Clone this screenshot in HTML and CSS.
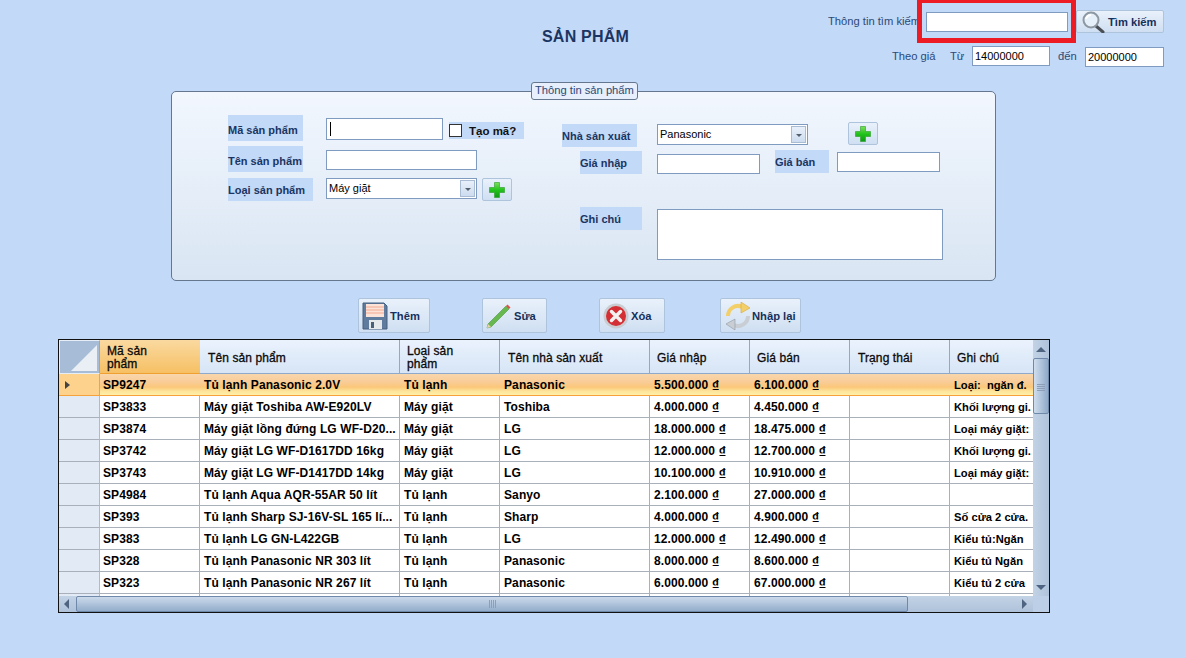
FILE: index.html
```html
<!DOCTYPE html>
<html lang="vi">
<head>
  <meta charset="UTF-8" />
  <title>Sản phẩm</title>
  <link rel="stylesheet" href="styles.css">
</head>
<body>
  <svg class="defs" width="0" height="0">
    <defs>
      <linearGradient id="plusFill" x1="0" y1="0" x2="0" y2="1">
        <stop offset="0" stop-color="#7be05a"/>
        <stop offset="0.5" stop-color="#22c21c"/>
        <stop offset="1" stop-color="#0b9a12"/>
      </linearGradient>
      <symbol id="plus" viewBox="0 0 16 16">
        <path d="M5.500 0.500h5v5h5v5h-5v5h-5v-5h-5v-5h5z" fill="url(#plusFill)" stroke="#2e9a2a" stroke-width="0.6"/>
      </symbol>
    </defs>
  </svg>

  <header class="top">
    <h1 class="title">SẢN PHẨM</h1>
    <div class="search">
      <div class="search-row">
        <span class="search-label">Thông tin tìm kiếm</span>
        <input class="field search-input" type="text" />
        <button class="btn search-btn">
          <svg width="26" height="22" viewBox="0 0 26 22">
            <path d="M15 15l7 6" stroke="#4a4f55" stroke-width="3" stroke-linecap="round"/>
            <circle cx="10" cy="9" r="7.500" fill="#e6f0fa" stroke="#8d98a3" stroke-width="2"/>
            <path d="M5 8a5.500 5.500 0 0 1 5-4" fill="none" stroke="#fff" stroke-width="2"/>
          </svg>
          Tìm kiếm
        </button>
      </div>
      <div class="price-row">
        <span class="price-label">Theo giá</span>
        <span class="from">Từ</span>
        <input class="field price-from" type="text" value="14000000" />
        <span class="to">đến</span>
        <input class="field price-to" type="text" value="20000000" />
      </div>
    </div>
  </header>

  <section class="panel">
    <span class="legend">Thông tin sản phẩm</span>
    <div class="col-left">
      <div class="row row-code">
        <label class="tag tag-75">Mã sản phẩm</label>
        <div class="field code-input"><i class="caret"></i></div>
        <div class="tag check-wrap"><i class="check"></i><b>Tạo mã?</b></div>
      </div>
      <div class="row row-name">
        <label class="tag tag-75">Tên sản phẩm</label>
        <input class="field name-input" type="text" />
      </div>
      <div class="row row-type">
        <label class="tag tag-85">Loại sản phẩm</label>
        <div class="field combo">Máy giặt<i class="combo-arrow"></i></div>
        <button class="btn plus-btn"><svg width="16" height="16"><use href="#plus"/></svg></button>
      </div>
    </div>
    <div class="col-right">
      <div class="row row-maker">
        <label class="tag tag-75">Nhà sản xuất</label>
        <div class="field combo">Panasonic<i class="combo-arrow"></i></div>
        <button class="btn plus-btn"><svg width="16" height="16"><use href="#plus"/></svg></button>
      </div>
      <div class="row row-price">
        <label class="tag tag-62">Giá nhập</label>
        <input class="field buy-input" type="text" />
        <label class="tag tag-54">Giá bán</label>
        <input class="field sell-input" type="text" />
      </div>
      <div class="row row-note">
        <label class="tag tag-62">Ghi chú</label>
        <textarea class="field note-input"></textarea>
      </div>
    </div>
  </section>

  <div class="actions">
    <button class="btn act act-add">
      <svg width="26" height="28" viewBox="0 0 26 28">
        <path d="M1 1h21l3 3v23H1z" fill="#5f7b9d" stroke="#46607f"/>
        <rect x="4" y="2" width="18" height="13" fill="#fbe3d9"/>
        <path d="M4 5h18M4 8h18M4 11h18" stroke="#f3a98f"/>
        <rect x="7" y="18" width="13" height="9" fill="#e6e9ec"/>
        <rect x="9" y="20" width="3" height="6" fill="#4a5f78"/>
      </svg>
      Thêm
    </button>
    <button class="btn act act-edit">
      <svg width="26" height="28" viewBox="0 0 26 28">
        <path d="M1 26l1-4L20 4l3 3L5 25z" fill="#67b84f" stroke="#3f8a35" stroke-width="0.5"/>
        <path d="M20 4l1.500-1.500 3 3L23 7z" fill="#d9534f"/>
        <path d="M1 26l1-4 3 3z" fill="#e9d3a8"/>
      </svg>
      Sửa
    </button>
    <button class="btn act act-del">
      <svg width="26" height="26" viewBox="0 0 26 26">
        <circle cx="13" cy="13" r="12.500" fill="#c9ccd0"/>
        <circle cx="13" cy="13" r="10" fill="#d32f34"/>
        <path d="M8.500 8.500l9 9M17.500 8.500l-9 9" stroke="#f4f1f1" stroke-width="3.500" stroke-linecap="round"/>
      </svg>
      Xóa
    </button>
    <button class="btn act act-reset">
      <svg width="28" height="28" viewBox="0 0 28 28">
        <path d="M4 14A10 10 0 0 1 18 4.800" fill="none" stroke="#f3cf6a" stroke-width="4"/>
        <path d="M17 0l9 6-9 5z" fill="#f3cf6a" stroke="#d9a93a" stroke-width="0.6"/>
        <path d="M24 14A10 10 0 0 1 10 23.200" fill="none" stroke="#c9ced4" stroke-width="4"/>
        <path d="M11 28l-9-6 9-5z" fill="#c9ced4" stroke="#8f98a3" stroke-width="0.6"/>
      </svg>
      Nhập lại
    </button>
  </div>

  <div class="grid">
    <div class="grid-view">
      <table>
        <colgroup>
          <col class="c-head"><col class="c-100"><col class="c-200"><col class="c-100"><col class="c-150"><col class="c-100"><col class="c-100"><col class="c-100"><col class="c-83">
        </colgroup>
        <thead>
          <tr>
            <th class="corner"><i></i></th>
            <th class="sel two-line">Mã sản<br>phẩm</th>
            <th>Tên sản phẩm</th>
            <th class="two-line">Loại sản<br>phẩm</th>
            <th>Tên nhà sản xuất</th>
            <th class="price">Giá nhập</th>
            <th class="price">Giá bán</th>
            <th>Trạng thái</th>
            <th class="last">Ghi chú</th>
          </tr>
        </thead>
        <tbody>
          <tr class="current"><td class="rh"><i class="pointer"></i></td><td>SP9247</td><td>Tủ lạnh Panasonic 2.0V</td><td>Tủ lạnh</td><td>Panasonic</td><td>5.500.000 <span class="vnd">₫</span></td><td>6.100.000 <span class="vnd">₫</span></td><td></td><td>Loại:  ngăn đ.</td></tr>
          <tr><td class="rh"></td><td>SP3833</td><td>Máy giặt Toshiba AW-E920LV</td><td>Máy giặt</td><td>Toshiba</td><td>4.000.000 <span class="vnd">₫</span></td><td>4.450.000 <span class="vnd">₫</span></td><td></td><td>Khối lượng gi.</td></tr>
          <tr><td class="rh"></td><td>SP3874</td><td>Máy giặt lồng đứng LG WF-D20...</td><td>Máy giặt</td><td>LG</td><td>18.000.000 <span class="vnd">₫</span></td><td>18.475.000 <span class="vnd">₫</span></td><td></td><td>Loại máy giặt:</td></tr>
          <tr><td class="rh"></td><td>SP3742</td><td>Máy giặt LG WF-D1617DD 16kg</td><td>Máy giặt</td><td>LG</td><td>12.000.000 <span class="vnd">₫</span></td><td>12.700.000 <span class="vnd">₫</span></td><td></td><td>Khối lượng gi.</td></tr>
          <tr><td class="rh"></td><td>SP3743</td><td>Máy giặt LG WF-D1417DD 14kg</td><td>Máy giặt</td><td>LG</td><td>10.100.000 <span class="vnd">₫</span></td><td>10.910.000 <span class="vnd">₫</span></td><td></td><td>Loại máy giặt:</td></tr>
          <tr><td class="rh"></td><td>SP4984</td><td>Tủ lạnh Aqua AQR-55AR 50 lít</td><td>Tủ lạnh</td><td>Sanyo</td><td>2.100.000 <span class="vnd">₫</span></td><td>27.000.000 <span class="vnd">₫</span></td><td></td><td></td></tr>
          <tr><td class="rh"></td><td>SP393</td><td>Tủ lạnh Sharp SJ-16V-SL 165 lí...</td><td>Tủ lạnh</td><td>Sharp</td><td>4.000.000 <span class="vnd">₫</span></td><td>4.900.000 <span class="vnd">₫</span></td><td></td><td>Số cửa 2 cửa.</td></tr>
          <tr><td class="rh"></td><td>SP383</td><td>Tủ lạnh LG GN-L422GB</td><td>Tủ lạnh</td><td>LG</td><td>12.000.000 <span class="vnd">₫</span></td><td>12.490.000 <span class="vnd">₫</span></td><td></td><td>Kiểu tủ:Ngăn</td></tr>
          <tr><td class="rh"></td><td>SP328</td><td>Tủ lạnh Panasonic NR 303 lít</td><td>Tủ lạnh</td><td>Panasonic</td><td>8.000.000 <span class="vnd">₫</span></td><td>8.600.000 <span class="vnd">₫</span></td><td></td><td>Kiểu tủ Ngăn</td></tr>
          <tr><td class="rh"></td><td>SP323</td><td>Tủ lạnh Panasonic NR 267 lít</td><td>Tủ lạnh</td><td>Panasonic</td><td>6.000.000 <span class="vnd">₫</span></td><td>67.000.000 <span class="vnd">₫</span></td><td></td><td>Kiểu tủ 2 cửa</td></tr>
          <tr><td class="rh"></td><td></td><td></td><td></td><td></td><td></td><td></td><td></td><td></td></tr>
        </tbody>
      </table>
    </div>
    <div class="vscroll">
      <i class="arrow-up"></i>
      <div class="vthumb"><i class="grip-h"></i></div>
      <i class="arrow-down"></i>
    </div>
    <div class="hscroll">
      <i class="arrow-left"></i>
      <div class="hthumb"><i class="grip-v"></i></div>
      <i class="arrow-right"></i>
    </div>
    <div class="scroll-corner"></div>
  </div>

  <div class="highlight"></div>
</body>
</html>
```

FILE: styles.css
```css
html, body {
  margin: 0;
  height: 658px;
  overflow: hidden;
}

body {
  position: relative;
  background-color: #c2d9f7;
  font-family: "Liberation Sans", Arial, sans-serif;
  font-size: 12px;
  color: #15305b;
}

.defs {
  position: absolute;
}

/* top bar */
.top {
  display: flex;
  justify-content: space-between;
  height: 82px;
  padding: 0 22px 0 542px;
  box-sizing: border-box;
}

.title {
  margin: 28px 0 0;
  font-size: 16px;
  font-weight: bold;
  line-height: 18px;
  letter-spacing: 0.2px;
  color: #1b3562;
}

.search {
  width: 336px;
}

.search-row {
  display: flex;
  align-items: flex-start;
  padding-top: 10px;
}

.search-label {
  width: 98px;
  line-height: 22px;
  white-space: nowrap;
  color: #2c4a78;
  font-size: 11.2px;
}

.field {
  display: block;
  box-sizing: border-box;
  margin: 0;
  padding: 0 2px;
  background: #fff;
  border: 1px solid #7f9cc0;
  border-radius: 0;
  font-family: "Liberation Sans", Arial, sans-serif;
  font-size: 11px;
  color: #000;
  outline: none;
  resize: none;
}

.search-input {
  width: 142px;
  height: 20px;
  margin-top: 2px;
  margin-right: 8px;
}

.btn {
  display: flex;
  align-items: center;
  box-sizing: border-box;
  margin: 0;
  padding: 0;
  background: linear-gradient(#e9f1fb, #cfdff2);
  border: 1px solid #aec3dc;
  border-radius: 2px;
  font-family: "Liberation Sans", Arial, sans-serif;
  font-size: 11.2px;
  font-weight: bold;
  color: #15305b;
  white-space: nowrap;
}

.search-btn {
  width: 88px;
  height: 23px;
  padding-left: 4px;
  gap: 1px;
}

.price-row {
  display: flex;
  align-items: flex-start;
  margin-top: 13px;
  padding-left: 64px;
  line-height: 20px;
  color: #2c4a78;
  font-size: 11.2px;
}

.price-label {
  width: 43px;
  white-space: nowrap;
}

.from {
  margin-left: 15px;
  width: 22px;
}

.price-from {
  width: 78px;
  height: 20px;
}

.to {
  margin-left: 8px;
  width: 27px;
}

.price-to {
  width: 79px;
  height: 20px;
  margin-top: 1px;
}

/* thong tin san pham */
.panel {
  position: relative;
  display: flex;
  box-sizing: border-box;
  width: 825px;
  height: 190px;
  margin: 9px 0 0 171px;
  background: linear-gradient(#f2f7fe, #d9e5f3);
  border: 1px solid #64778f;
  border-radius: 5px;
}

.legend {
  position: absolute;
  left: 359px;
  top: -10px;
  height: 16px;
  padding: 0 3px;
  background: #e6effb;
  border: 1px solid #64778f;
  border-radius: 3px;
  font-size: 11.2px;
  line-height: 15px;
  color: #2c4a78;
  white-space: nowrap;
}

.row {
  display: flex;
  align-items: flex-start;
}

.tag {
  display: flex;
  align-items: center;
  box-sizing: border-box;
  background: #c2d9f7;
  font-weight: bold;
  font-size: 11px;
  color: #1b3562;
  white-space: nowrap;
}

.tag-75 { width: 75px; }
.tag-85 { width: 85px; }
.tag-62 { width: 62px; }
.tag-54 { width: 54px; }

.col-left {
  width: 334px;
  margin-left: 56px;
  padding-top: 23px;
  flex: none;
}

.col-right {
  flex: none;
}

.row-code .tag-75 { height: 26px; padding-top: 4px; }
.row-code .code-input {
  width: 117px;
  height: 22px;
  margin: 3px 6px 0 23px;
  display: flex;
  align-items: center;
}

.caret {
  display: block;
  width: 1px;
  height: 14px;
  margin-left: 1px;
  background: #000;
}

.check-wrap {
  width: 75px;
  height: 17px;
  margin-top: 7px;
  color: #111;
  font-size: 11.5px;
}

.check {
  display: block;
  box-sizing: border-box;
  width: 13px;
  height: 13px;
  margin-right: 7px;
  background: #fff;
  border: 1px solid #333;
}

.row-name {
  margin-top: 5px;
}

.row-name .tag-75 { height: 26px; padding-top: 4px; }

.name-input {
  width: 151px;
  height: 20px;
  margin: 4px 0 0 23px;
}

.row-type {
  margin-top: 6px;
}

.row-type .tag-85 { height: 23px; }

.combo {
  position: relative;
  width: 151px;
  height: 21px;
  line-height: 19px;
  padding: 0 2px;
}

.row-type .combo { margin: 0 5px 0 13px; }
.row-maker .combo { margin: 0 40px 0 20px; }

.combo-arrow {
  position: absolute;
  right: 1px;
  top: 1px;
  box-sizing: border-box;
  width: 15px;
  height: 17px;
  background: linear-gradient(#e8f0fa, #cddcef);
  border: 1px solid #a9bcd4;
}

.combo-arrow::after {
  content: "";
  position: absolute;
  left: 4px;
  top: 7px;
  border-left: 3px solid transparent;
  border-right: 3px solid transparent;
  border-top: 3px solid #56606d;
}

.plus-btn {
  justify-content: center;
  width: 30px;
  height: 23px;
  flex: none;
}

.row-maker {
  padding-top: 32px;
}

.row-maker .tag-75 { height: 23px; }
.row-maker .plus-btn { margin-top: -2px; }

.row-price {
  margin: 4px 0 0 18px;
}

.row-price .tag { height: 23px; }

.buy-input {
  width: 103px;
  height: 20px;
  margin: 3px 15px 0 15px;
}

.row-price .tag-54 { margin-top: -1px; }

.sell-input {
  width: 103px;
  height: 20px;
  margin: 1px 0 0 8px;
}

.row-note {
  margin: 33px 0 0 18px;
}

.row-note .tag { height: 23px; }

.note-input {
  width: 286px;
  height: 51px;
  margin: 2px 0 0 15px;
}

/* buttons */
.actions {
  display: flex;
  align-items: center;
  height: 35px;
  margin: 17px 0 0 358px;
}

.act {
  height: 35px;
  gap: 2px;
  padding-left: 3px;
}

.act-add { width: 72px; margin-right: 52px; }
.act-edit { width: 65px; margin-right: 52px; gap: 2px; }
.act-del { width: 66px; margin-right: 55px; }
.act-reset { width: 81px; gap: 0; }

/* data grid */
.grid {
  display: grid;
  grid-template-columns: 974px 16px;
  grid-template-rows: 256px 16px;
  width: 990px;
  margin: 6px 0 0 58px;
  border: 1px solid #111;
  background: #fff;
}

.grid-view {
  overflow: hidden;
}

table {
  width: 974px;
  table-layout: fixed;
  border-collapse: separate;
  border-spacing: 0;
}

.c-head { width: 41px; }
.c-83 { width: 83px; }
.c-100 { width: 100px; }
.c-150 { width: 150px; }
.c-200 { width: 200px; }

th {
  box-sizing: border-box;
  height: 34px;
  padding: 3px 8px 0;
  background: linear-gradient(#eaf2fd, #d7e5f6);
  border-right: 1px solid #8ea9c9;
  border-bottom: 1px solid #8ea9c9;
  font-weight: normal;
  font-size: 12px;
  line-height: 13px;
  letter-spacing: 0.1px;
  text-align: left;
  color: #0a0a0a;
  -webkit-text-stroke: 0.3px #0a0a0a;
}

th.last {
  padding-left: 7px;
  border-right: 0;
}

th.price {
  padding-left: 7px;
}

th.two-line {
  padding-left: 7px;
  padding-right: 7px;
}

th.sel {
  background: linear-gradient(#fad9a0, #f6c064);
  border-right: 0;
  border-bottom: 1px solid #f0a030;
}

th.corner {
  position: relative;
  padding: 0;
  background: #a7bdd7;
  border: 1px solid #e5edf7;
  border-right-color: #8ea9c9;
}

.corner i {
  position: absolute;
  right: 2px;
  bottom: 2px;
  width: 0;
  height: 0;
  border-left: 26px solid transparent;
  border-bottom: 26px solid #eaeff5;
}

td {
  box-sizing: border-box;
  height: 22px;
  padding: 0 4px;
  background: #fff;
  border-right: 1px solid #a9b0ba;
  border-bottom: 1px solid #a9b0ba;
  font-weight: bold;
  font-size: 12px;
  letter-spacing: 0.1px;
  white-space: pre;
  overflow: hidden;
  color: #000;
}

td:nth-child(2) {
  padding-left: 3px;
}

td:last-child {
  border-right: 0;
  font-size: 11.2px;
  letter-spacing: 0;
}

.vnd {
  font-size: 15px;
  line-height: 12px;
  vertical-align: -2px;
}

td.rh {
  position: relative;
  background: #e2eaf6;
  border-right-color: #a9bcd4;
}

.current td {
  background: linear-gradient(#f9d6ac 0, #f9cc96 40%, #fbc779 62%, #fde49a 82%, #fff0a8 100%);
  border-right: 0;
  border-bottom-color: #f7a13c;
}

.current td.rh {
  background: #fdd28c;
  border-right: 1px solid #f7a13c;
}

.pointer {
  position: absolute;
  left: 6px;
  top: 7px;
  border-top: 4px solid transparent;
  border-bottom: 4px solid transparent;
  border-left: 5px solid #444;
}

/* scrollbars */
.vscroll {
  display: flex;
  flex-direction: column;
  background: linear-gradient(90deg, #c3d3e6, #aec2da);
}

.arrow-up {
  flex: none;
  height: 18px;
  position: relative;
}

.arrow-up::after {
  content: "";
  position: absolute;
  left: 3px;
  top: 7px;
  border-left: 5px solid transparent;
  border-right: 5px solid transparent;
  border-bottom: 5px solid #4f6480;
}

.vthumb {
  flex: none;
  position: relative;
  height: 56px;
  box-sizing: border-box;
  background: linear-gradient(90deg, #d0deee, #8fa9c8);
  border: 1px solid #6f89ab;
  border-radius: 2px;
}

.grip-h {
  position: absolute;
  left: 3px;
  right: 3px;
  top: 25px;
  height: 7px;
  background: repeating-linear-gradient(#8c9fb7 0 1px, transparent 1px 2px);
}

.arrow-down {
  flex: 1;
  position: relative;
}

.arrow-down::after {
  content: "";
  position: absolute;
  left: 3px;
  bottom: 6px;
  border-left: 5px solid transparent;
  border-right: 5px solid transparent;
  border-top: 5px solid #4f6480;
}

.hscroll {
  display: flex;
  background: linear-gradient(#c3d3e6, #aec2da);
  position: relative;
}

.arrow-left {
  flex: none;
  width: 17px;
  position: relative;
}

.arrow-left::after {
  content: "";
  position: absolute;
  left: 5px;
  top: 3px;
  border-top: 5px solid transparent;
  border-bottom: 5px solid transparent;
  border-right: 5px solid #4f6480;
}

.hthumb {
  flex: none;
  position: relative;
  width: 832px;
  box-sizing: border-box;
  background: linear-gradient(#cbdaeb, #93adcb);
  border: 1px solid #6f89ab;
  border-radius: 2px;
}

.grip-v {
  position: absolute;
  left: 412px;
  top: 3px;
  bottom: 3px;
  width: 8px;
  background: repeating-linear-gradient(90deg, #8c9fb7 0 1px, transparent 1px 2px);
}

.arrow-right {
  flex: 1;
  position: relative;
}

.arrow-right::after {
  content: "";
  position: absolute;
  right: 6px;
  top: 3px;
  border-top: 5px solid transparent;
  border-bottom: 5px solid transparent;
  border-left: 5px solid #4f6480;
}

.scroll-corner {
  background: #bccfe6;
}

/* red box drawn over the screenshot */
.highlight {
  position: absolute;
  left: 917px;
  top: 0;
  box-sizing: border-box;
  width: 159px;
  height: 43px;
  border: 5px solid #ed1c24;
  border-top-width: 3px;
  pointer-events: none;
}
```
